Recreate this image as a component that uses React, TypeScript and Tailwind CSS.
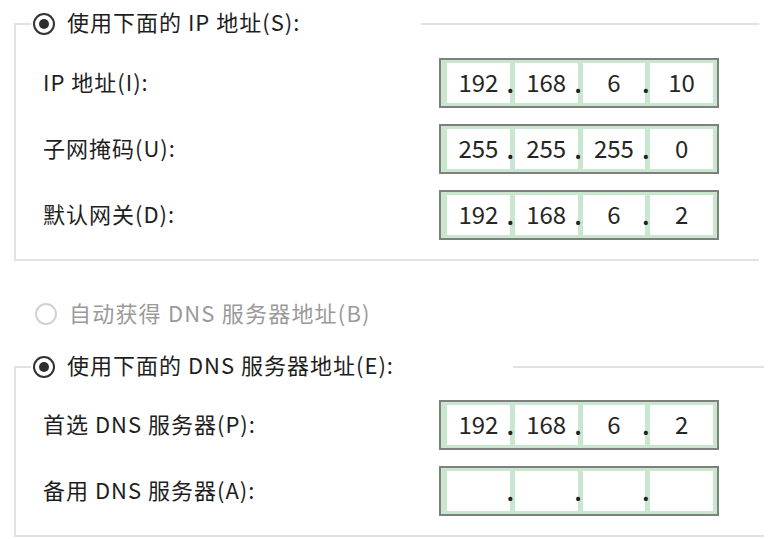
import React from "react";

const font = { fontFamily: '"Noto Sans CJK SC", "Microsoft YaHei", sans-serif' };

type Row = { label: string; parts: string[] };

const ipRows: Row[] = [
  { label: "IP 地址(I):", parts: ["192", "168", "6", "10"] },
  { label: "子网掩码(U):", parts: ["255", "255", "255", "0"] },
  { label: "默认网关(D):", parts: ["192", "168", "6", "2"] },
];

const dnsRows: Row[] = [
  { label: "首选 DNS 服务器(P):", parts: ["192", "168", "6", "2"] },
  { label: "备用 DNS 服务器(A):", parts: ["", "", "", ""] },
];

const Radio = ({ checked, disabled }: { checked?: boolean; disabled?: boolean }) => (
  <span
    className={`flex h-[22px] w-[22px] shrink-0 items-center justify-center rounded-full border-2 bg-white ${
      disabled ? "border-[#d2d2d2]" : "border-[#333333]"
    }`}
  >
    {checked && <span className="h-[10px] w-[10px] rounded-full bg-[#2e2e2e]" />}
  </span>
);

const IpBox = ({ parts }: { parts: string[] }) => (
  <div className="flex h-[50px] w-[280px] shrink-0 border-2 border-[#7f7f7f] bg-[#c9e7cf] py-[3px] pl-[6px] pr-[4px]">
    {parts.map((p, i) => (
      <React.Fragment key={i}>
        {i > 0 && (
          <div className="relative w-[5px] shrink-0">
            <span className="absolute bottom-[9px] left-[-3px] text-[22px] font-bold leading-none text-[#222]">.</span>
          </div>
        )}
        <div className="flex flex-1 items-center justify-center bg-white pb-[2px] text-[24px] text-[#262626]">{p}</div>
      </React.Fragment>
    ))}
  </div>
);

const Group = ({
  title,
  legendW,
  rows,
  width,
  pt,
}: {
  title: string;
  legendW: string;
  rows: Row[];
  width: string;
  pt: string;
}) => (
  <fieldset className={`${width} border-2 border-r-0 border-[#e2e2e2] pb-[19px]`}>
    <legend className={`ml-[15px] flex h-[30px] ${legendW} items-center gap-[12px] pl-[2px]`}>
      <Radio checked />
      <span className="-translate-y-[3px] text-[22px] tracking-[1px] text-[#1e1e1e]">{title}</span>
    </legend>
    <div className={`flex flex-col gap-[16px] ${pt}`}>
      {rows.map((r) => (
        <div key={r.label} className="flex items-center">
          <span className="w-[423px] -translate-y-[2px] pl-[27px] text-[22px] tracking-[1px] text-[#1e1e1e]">
            {r.label}
          </span>
          <IpBox parts={r.parts} />
        </div>
      ))}
    </div>
  </fieldset>
);

export default function App() {
  return (
    <div className="min-h-[539px] w-[778px] bg-white pl-[14px]" style={font}>
      <div className="pt-[9px]">
        <Group title="使用下面的 IP 地址(S):" legendW="w-[390px]" rows={ipRows} width="w-[745px]" pt="pt-[19px]" />
      </div>
      <div className="mt-[38px] flex h-[30px] items-center gap-[12px] pl-[21px]">
        <Radio disabled />
        <span className="-translate-y-[2px] text-[22px] tracking-[1.2px] text-[#9a9a9a]">自动获得 DNS 服务器地址(B)</span>
      </div>
      <div className="mt-[23px]">
        <Group title="使用下面的 DNS 服务器地址(E):" legendW="w-[482px]" rows={dnsRows} width="w-[750px]" pt="pt-[18px]" />
      </div>
    </div>
  );
}
